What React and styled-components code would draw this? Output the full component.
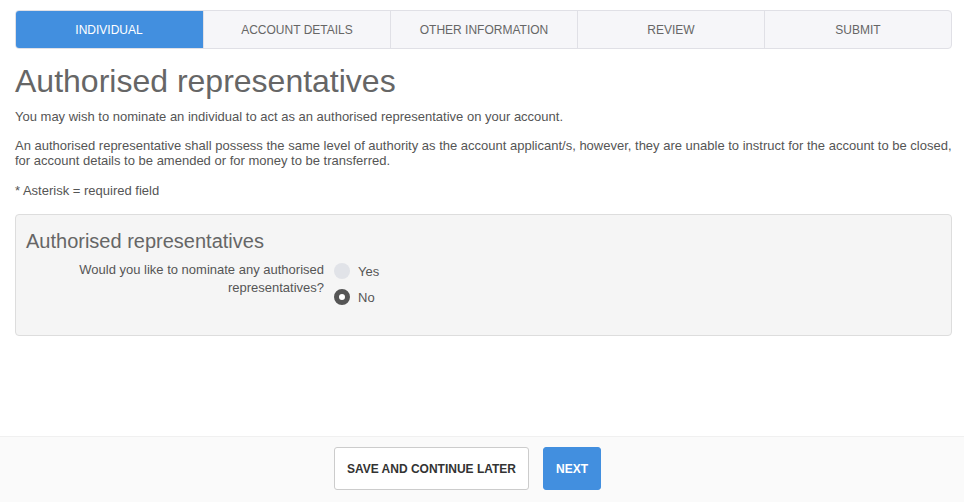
import styled, { createGlobalStyle } from "styled-components";

const Global = createGlobalStyle`
  html, body { margin: 0; padding: 0; background: #fff; }
  body {
    font-family: "Liberation Sans", Arial, sans-serif;
    color: #555;
  }
`;

const Page = styled.div`
  display: flex;
  flex-direction: column;
  min-height: 502px;
`;

const Main = styled.main`
  flex: 1;
  padding: 10px 12px 0 15px;
`;

const Steps = styled.nav`
  display: grid;
  grid-template-columns: repeat(5, 1fr);
  height: 39px;
  border: 1px solid #e0e0e6;
  border-radius: 4px;
  background: #f6f6f9;
  overflow: hidden;
  box-sizing: border-box;
`;

const Step = styled.div`
  display: flex;
  align-items: center;
  justify-content: center;
  font-size: 12px;
  text-transform: uppercase;
  color: ${(p) => (p.$active ? "#fff" : "#666")};
  background: ${(p) => (p.$active ? "#428fdf" : "transparent")};
  border-left: ${(p) => (p.$first ? "none" : "1px solid #e0e0e6")};
  margin: ${(p) => (p.$active ? "-1px 0 -1px -1px" : "0")};
`;

const Title = styled.h1`
  font-size: 32px;
  font-weight: normal;
  color: #666;
  margin: 13px 0 9px;
  line-height: 38px;
`;

const Para = styled.p`
  font-size: 13px;
  line-height: 15px;
  margin: 0 0 ${(p) => (p.$gap ? "15px" : "14px")};
  color: #555;
`;

const Panel = styled.section`
  margin-top: 16px;
  background: #f5f5f5;
  border: 1px solid #ddd;
  border-radius: 4px;
  padding: 14px 10px 30px;
  height: 122px;
  box-sizing: border-box;
`;

const PanelTitle = styled.h2`
  font-size: 20px;
  font-weight: normal;
  color: #666;
  margin: 0 0 8px;
  line-height: 24px;
`;

const Row = styled.div`
  display: grid;
  grid-template-columns: 298px 1fr;
  column-gap: 10px;
`;

const Label = styled.div`
  text-align: right;
  font-size: 13px;
  line-height: 18px;
  color: #555;
`;

const Options = styled.div`
  display: flex;
  flex-direction: column;
  gap: 10px;
  padding-top: 2px;
`;

const Option = styled.label`
  display: flex;
  align-items: center;
  gap: 8px;
  font-size: 13px;
  color: #555;
`;

const Dot = styled.span`
  width: 16px;
  height: 16px;
  border-radius: 50%;
  box-sizing: border-box;
  background: ${(p) => (p.$checked ? "#fff" : "#e1e3e8")};
  border: ${(p) => (p.$checked ? "5px solid #555" : "none")};
`;

const Footer = styled.footer`
  background: #fafafa;
  border-top: 1px solid #f0f0f0;
  height: 66px;
  box-sizing: border-box;
  display: flex;
  justify-content: center;
  align-items: center;
  gap: 14px;
  padding: 0 29px 2px 0;
`;

const Button = styled.button`
  height: 43px;
  border-radius: 3px;
  font-family: "Liberation Sans", Arial, sans-serif;
  font-size: 12px;
  font-weight: bold;
  text-transform: uppercase;
  padding: 0 12px;
  color: ${(p) => (p.$primary ? "#fff" : "#333")};
  background: ${(p) => (p.$primary ? "#428fdf" : "#fff")};
  border: 1px solid ${(p) => (p.$primary ? "#428fdf" : "#ccc")};
  cursor: pointer;
`;

const steps = ["Individual", "Account details", "Other information", "Review", "Submit"];

export default function App() {
  return (
    <Page>
      <Global />
      <Main>
        <Steps>
          {steps.map((s, i) => (
            <Step key={s} $active={i === 0} $first={i === 0}>
              {s}
            </Step>
          ))}
        </Steps>
        <Title>Authorised representatives</Title>
        <Para>You may wish to nominate an individual to act as an authorised representative on your account.</Para>
        <Para $gap>
          An authorised representative shall possess the same level of authority as the account applicant/s, however, they are unable to instruct for the account to be closed, for account details to be amended or for money to be transferred.
        </Para>
        <Para>* Asterisk = required field</Para>
        <Panel>
          <PanelTitle>Authorised representatives</PanelTitle>
          <Row>
            <Label>
              Would you like to nominate any authorised
              <br />
              representatives?
            </Label>
            <Options>
              <Option>
                <Dot />
                Yes
              </Option>
              <Option>
                <Dot $checked />
                No
              </Option>
            </Options>
          </Row>
        </Panel>
      </Main>
      <Footer>
        <Button>Save and continue later</Button>
        <Button $primary>Next</Button>
      </Footer>
    </Page>
  );
}
